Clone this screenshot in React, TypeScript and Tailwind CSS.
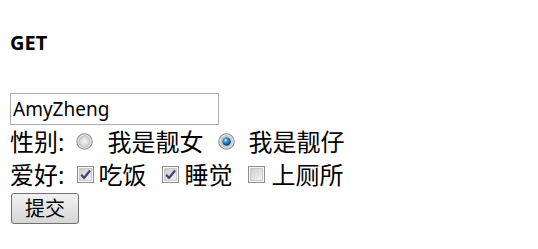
import React from "react";

function Radio({ checked }: { checked?: boolean }) {
  return (
    <svg width="17" height="17" viewBox="0 0 16 16" className="shrink-0">
      <defs>
        <radialGradient id="rg-off" cx="50%" cy="50%" r="50%">
          <stop offset="0%" stopColor="#f6f6f6" />
          <stop offset="65%" stopColor="#dadada" />
          <stop offset="100%" stopColor="#bdbdbd" />
        </radialGradient>
        <radialGradient id="rg-on" cx="40%" cy="35%" r="65%">
          <stop offset="0%" stopColor="#c8eeff" />
          <stop offset="40%" stopColor="#2e93d6" />
          <stop offset="100%" stopColor="#093a6b" />
        </radialGradient>
      </defs>
      <circle cx="8" cy="8" r="7.3" fill="#ececec" stroke="#8d8d8d" strokeWidth="1" />
      <circle cx="8" cy="8" r="5.6" fill="url(#rg-off)" stroke="#cfcfcf" strokeWidth="0.8" />
      {checked && <circle cx="8" cy="8" r="4" fill="url(#rg-on)" />}
    </svg>
  );
}

function Checkbox({ checked }: { checked?: boolean }) {
  return (
    <svg width="17" height="17" viewBox="0 0 16 16" className="shrink-0">
      <defs>
        <linearGradient id="cb-bg" x1="0" y1="0" x2="1" y2="1">
          <stop offset="0%" stopColor="#cbcbcb" />
          <stop offset="100%" stopColor="#f7f7f7" />
        </linearGradient>
      </defs>
      <rect x="0.5" y="0.5" width="15" height="15" fill="#ffffff" stroke="#8e8f8f" />
      <rect x="2.5" y="2.5" width="11" height="11" fill="url(#cb-bg)" stroke="#bdbdbd" strokeWidth="0.8" />
      {checked && (
        <path
          d="M4 8.2 L6.6 11.3 L12.3 4.2"
          fill="none"
          stroke="#3a4880"
          strokeWidth="2.1"
          strokeLinejoin="round"
        />
      )}
    </svg>
  );
}

export default function App() {
  return (
    <div
      className="min-h-screen bg-white pl-[10px] text-black"
      style={{ fontFamily: '"Noto Sans", "Noto Sans CJK SC", sans-serif' }}
    >
      <div className="pt-[33px] text-[20px] font-bold leading-[20px]">GET</div>

      <form className="mt-[40px]">
        <input
          type="text"
          defaultValue="AmyZheng"
          className="block h-[32px] w-[209px] border border-[#abadb3] bg-white px-[2px] text-[19px] outline-none"
        />

        <div className="flex h-[33px] items-center text-[24px] leading-[33px]">
          <span>性别:</span>
          <span className="ml-[12px] flex">
            <Radio />
          </span>
          <span className="ml-[14px]">我是靓女</span>
          <span className="ml-[15px] flex">
            <Radio checked />
          </span>
          <span className="ml-[13px]">我是靓仔</span>
        </div>

        <div className="flex h-[33px] items-center text-[24px] leading-[33px]">
          <span>爱好:</span>
          <span className="ml-[13px] flex">
            <Checkbox checked />
          </span>
          <span className="ml-[4px]">吃饭</span>
          <span className="ml-[16px] flex">
            <Checkbox checked />
          </span>
          <span className="ml-[5px]">睡觉</span>
          <span className="ml-[16px] flex">
            <Checkbox />
          </span>
          <span className="ml-[6px]">上厕所</span>
        </div>

        <button
          type="button"
          className="mt-[2px] ml-[1px] flex h-[31px] w-[68px] items-center justify-center rounded-[3px] border border-[#707070] bg-gradient-to-b from-[#f2f2f2] to-[#d6d6d6] text-[20px] leading-none"
        >
          提交
        </button>
      </form>
    </div>
  );
}
